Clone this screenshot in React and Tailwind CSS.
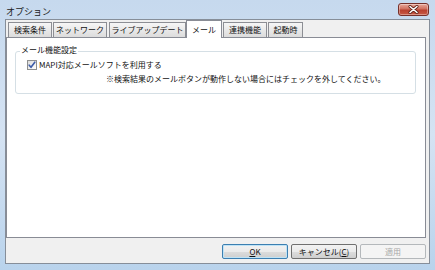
import React from "react";

const tabs = [
  { label: "検索条件", cls: "w-[44px]" },
  { label: "ネットワーク", cls: "ml-px w-[54px]" },
  { label: "ライブアップデート", cls: "ml-[2px] w-[77px]" },
  { label: "メール", cls: "w-[36px]", active: true },
  { label: "連携機能", cls: "ml-px w-[44px]" },
  { label: "起動時", cls: "ml-px w-[35px]" },
];

// --- Tab ---
const Tab = ({ label, cls, active }) =>
  active ? (
    <div
      className={`${cls} relative z-10 -mb-px h-[18px] flex items-center justify-center bg-white border border-b-0 border-[#898c95] text-[8px] leading-none text-[#111]`}
    >
      {label}
    </div>
  ) : (
    <div
      className={`${cls} h-[15px] flex items-center justify-center border border-b-0 border-[#8c8e94] bg-linear-to-b from-[#f6f6f6] to-[#dcdcdc] text-[8px] leading-none text-[#111]`}
    >
      {label}
    </div>
  );

// --- Vista style checkbox ---
const CheckBox = () => (
  <div className="w-[10px] h-[10px] border border-[#8e8f8f] bg-linear-to-br from-[#dcdcdc] to-white flex items-center justify-center">
    <svg width="8" height="8" viewBox="0 0 8 8">
      <path
        d="M1.2 4.2 L3 6.3 L6.8 1.2"
        fill="none"
        stroke="#3d5ca8"
        strokeWidth="1.6"
        strokeLinecap="round"
        strokeLinejoin="round"
      />
    </svg>
  </div>
);

// --- Button ---
const DlgButton = ({ children, variant }) => {
  const base =
    "w-[66px] h-[15px] rounded-[2px] border flex items-center justify-center text-[8px] leading-none";
  if (variant === "default")
    return (
      <button
        className={`${base} border-[#3c7fb1] shadow-[inset_0_0_0_1px_#bfe3f6] bg-[linear-gradient(#f2f2f2,#ebebeb_50%,#dddddd_50%,#cfcfcf)] text-[#111]`}
      >
        {children}
      </button>
    );
  if (variant === "disabled")
    return (
      <button
        className={`${base} border-[#b4b8bb] bg-[#f4f4f4] text-[#a8a8a8]`}
      >
        {children}
      </button>
    );
  return (
    <button
      className={`${base} border-[#707070] bg-[linear-gradient(#f2f2f2,#ebebeb_50%,#dddddd_50%,#cfcfcf)] text-[#111]`}
    >
      {children}
    </button>
  );
};

const App = () => {
  return (
    <div className="relative w-[435px] h-[270px] overflow-hidden flex flex-col bg-linear-to-b from-[#c6d9ee] via-[#d5e3f3] to-[#b9d3ec] font-['Noto_Sans_CJK_JP','Noto_Sans',sans-serif]">
      {/* title bar */}
      <div className="h-[19px] flex items-center pl-[6px] pt-[3px] text-[9px] leading-none text-[#1a1a1a]">
        オプション
      </div>
      <div className="absolute right-[6px] top-[3px] w-[31px] h-[13px] rounded-[3px] border border-[#76302a] bg-[linear-gradient(#e8a99c,#d0705f_45%,#b8402f_55%,#c85a45)] shadow-[inset_0_0_0_1px_rgba(255,255,255,0.35)] flex items-center justify-center">
        <svg width="11" height="9" viewBox="0 0 11 9">
          <path
            d="M2 1.5 L9 7.5 M9 1.5 L2 7.5"
            stroke="#5a1e16"
            strokeWidth="3"
            strokeLinecap="round"
          />
          <path
            d="M2 1.5 L9 7.5 M9 1.5 L2 7.5"
            stroke="#ffffff"
            strokeWidth="1.6"
            strokeLinecap="round"
          />
        </svg>
      </div>

      {/* client area */}
      <div className="mx-[5px] w-[425px] h-[245px] border border-[#868e99] bg-[#f0f0f0] flex flex-col">
        {/* tabs */}
        <div className="h-[17px] flex items-end pl-[2px]">
          {tabs.map((t) => (
            <Tab key={t.label} {...t} />
          ))}
        </div>

        {/* tab page */}
        <div className="w-[420px] h-[201px] bg-white border border-[#898c95]">
          <div className="relative mt-[13px] ml-[8px] w-[401px] h-[43px] border border-[#d5dfe5] rounded-[3px]">
            <div className="absolute top-[-7px] left-[4px] bg-white px-px text-[8px] leading-[10px] text-[#111]">
              メール機能設定
            </div>
            <div className="pt-[8px] pl-[11px] flex items-center gap-[2px] h-[18px]">
              <CheckBox />
              <span className="text-[8px] leading-[10px] text-[#111]">
                MAPI対応メールソフトを利用する
              </span>
            </div>
            <div className="mt-[4px] ml-[90px] h-[10px] text-[8px] leading-[10px] text-[#111] whitespace-nowrap">
              ※検索結果のメールボタンが動作しない場合にはチェックを外してください。
            </div>
          </div>
        </div>

        {/* buttons */}
        <div className="h-[25px] flex justify-end items-start pt-[6px] pr-[3px] gap-[3px]">
          <DlgButton variant="default">
            <span className="underline">O</span>K
          </DlgButton>
          <DlgButton>
            キャンセル(<span className="underline">C</span>)
          </DlgButton>
          <DlgButton variant="disabled">適用</DlgButton>
        </div>
      </div>
    </div>
  );
};

export default App;
